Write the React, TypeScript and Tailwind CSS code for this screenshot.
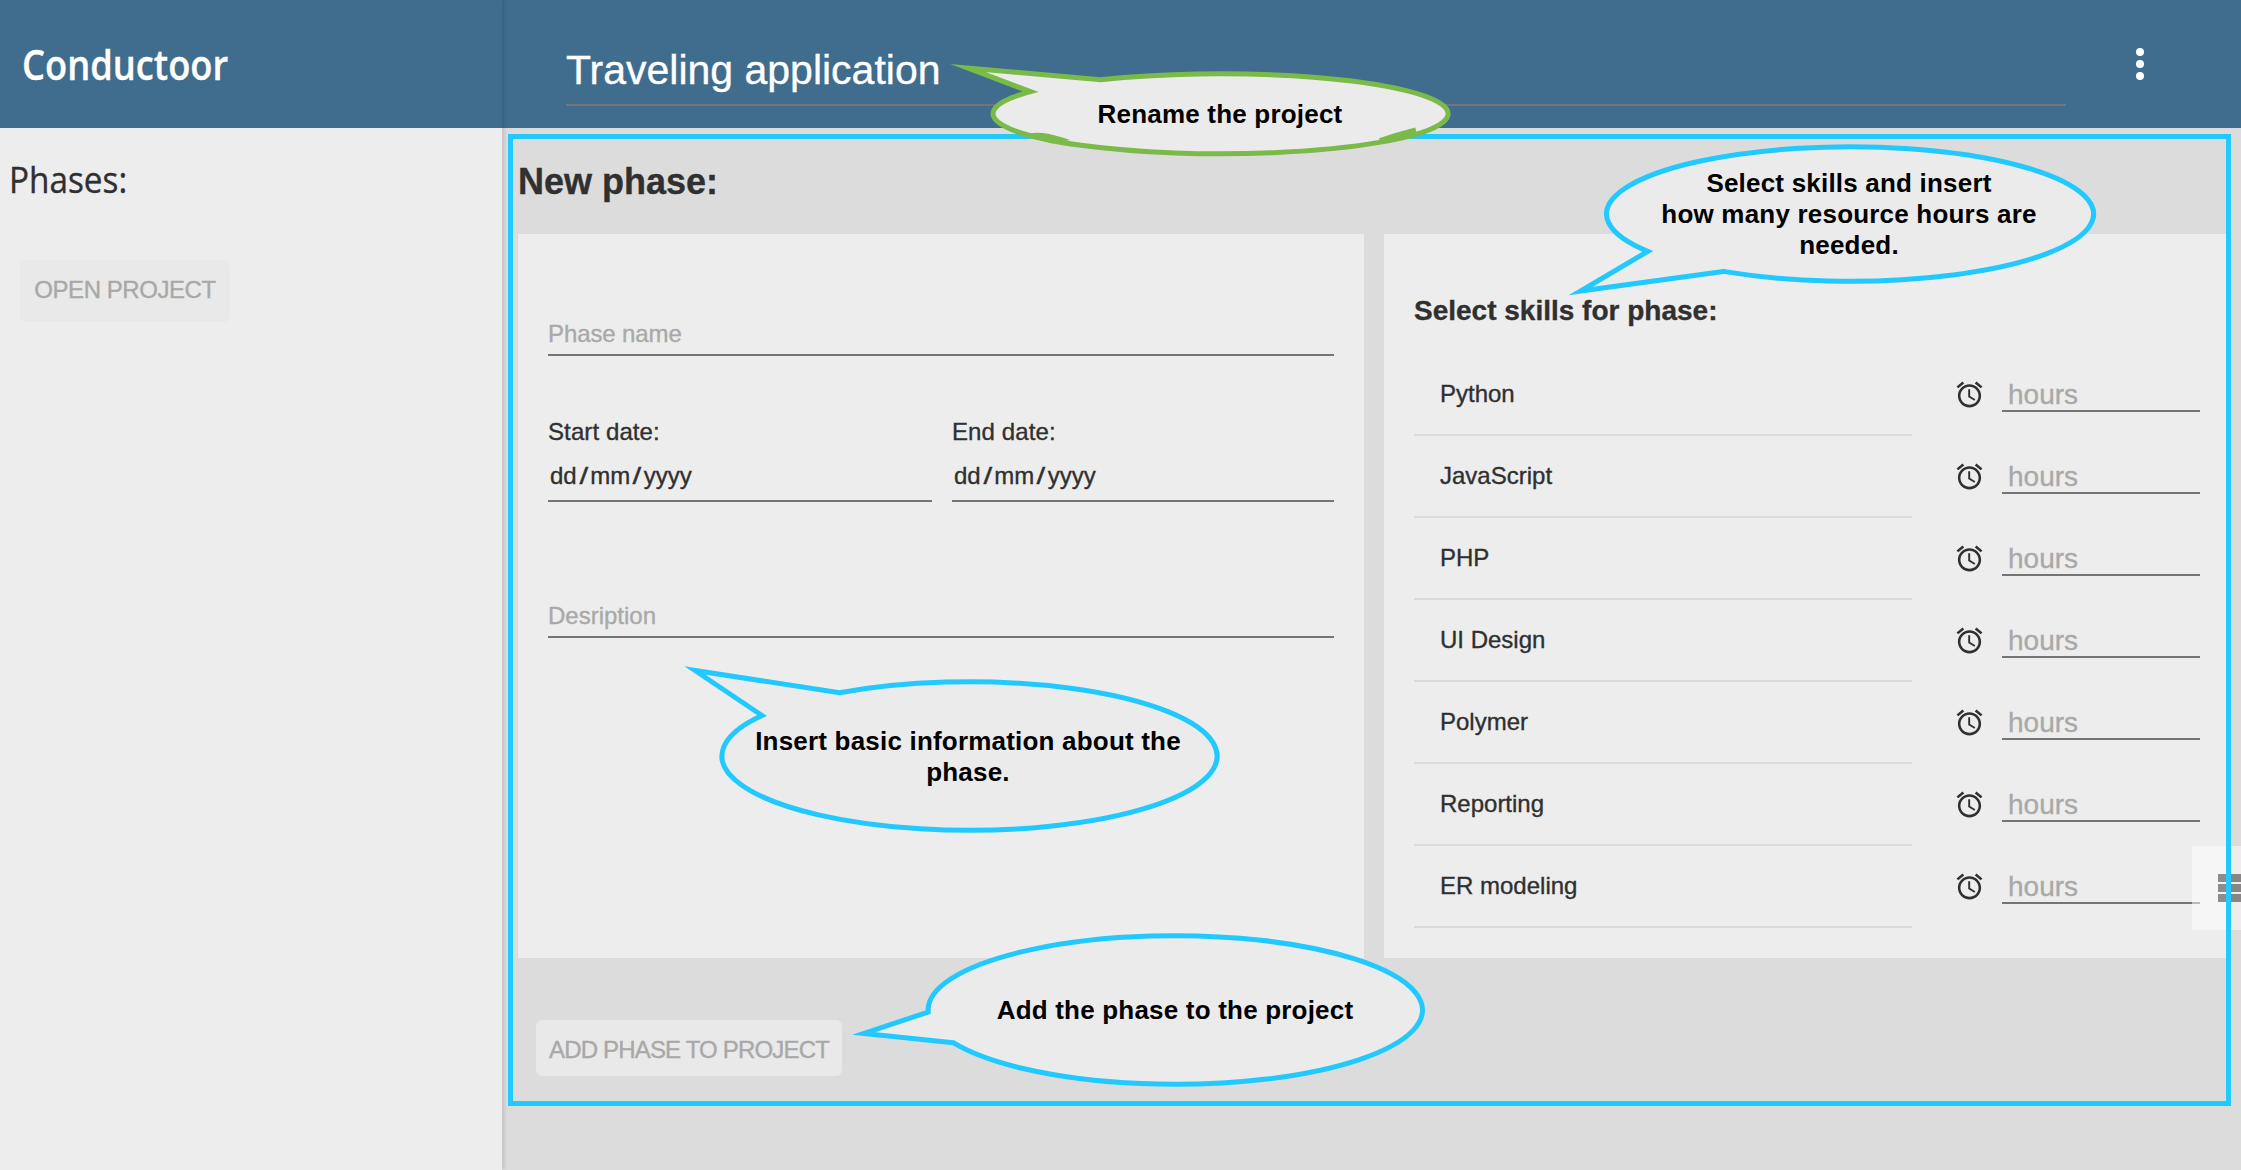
const SKILLS = ['Python', 'JavaScript', 'PHP', 'UI Design', 'Polymer', 'Reporting', 'ER modeling'];

function AlarmIcon() {
  return (
    <svg viewBox="0 0 24 24" className="h-[31px] w-[31px] shrink-0 fill-[#303030]">
      <path d="M22 5.72l-4.6-3.86-1.29 1.53 4.6 3.86L22 5.72zM7.88 3.39L6.6 1.86 2 5.71l1.29 1.53 4.59-3.85zM12.5 8H11v6l4.75 2.85.75-1.23-4-2.37V8zM12 4c-4.97 0-9 4.03-9 9s4.02 9 9 9c4.97 0 9-4.03 9-9s-4.03-9-9-9zm0 16c-3.87 0-7-3.13-7-7s3.13-7 7-7 7 3.13 7 7-3.13 7-7 7z" />
    </svg>
  );
}

function Slash() {
  return <span className="w-[9.5px] scale-x-[1.3] text-center">/</span>;
}

function DateField({ label }: { label: string }) {
  return (
    <div className="h-[82px] border-b-2 border-[#757575] text-[24px] text-[#303030]">
      <div className="-mt-[2px] h-[28px] leading-[28px] tracking-[0.1px]">{label}</div>
      <div className="mt-[16px] flex h-[28px] leading-[28px]">
        <span className="px-[2px]">dd</span>
        <Slash />
        <span className="px-[2px]">mm</span>
        <Slash />
        <span className="px-[2px]">yyyy</span>
      </div>
    </div>
  );
}

function SkillRow({ name }: { name: string }) {
  return (
    <div className="flex h-[82px]">
      <div className="w-[498px] border-b-2 border-[#dbdbdb] pl-[26px] pt-[26px] text-[24px] leading-[28px] text-[#303030]">
        {name}
      </div>
      <div className="ml-[42px] pt-[25px]">
        <AlarmIcon />
      </div>
      <div className="ml-[17px] h-[58px] w-[198px] border-b-2 border-[#757575] pl-[6px] pt-[25px] text-[28px] leading-[32px] text-[#a9a9a9]">
        hours
      </div>
    </div>
  );
}

function Annotations() {
  return (
    <div className="pointer-events-none absolute inset-0 z-20 [-webkit-text-stroke:0]">
      <div className="absolute left-[508px] top-[134px] h-[972px] w-[1723px] border-[5px] border-[#22c9ff]" />
      <svg viewBox="0 0 2241 1170" className="absolute inset-0 h-full w-full" fill="#ebebeb" strokeWidth="5" strokeMiterlimit="20">
        <g stroke="#22c9ff">
          <path d="M1723.3 271.4 L1580.5 291 L1647.7 251.4 A243.5 67.2 0 1 1 1723.3 271.4 Z" />
          <path d="M762 715.5 L695 670.5 L839.5 692.8 A247.6 74.3 0 1 1 762 715.5 Z" />
          <path d="M953.3 1042.7 L864 1033.5 L928.2 1012 A247.2 74.3 0 1 1 953.3 1042.7 Z" />
        </g>
        <g stroke="#7aba49">
          <path d="M1030.5 91.7 L968 68 L1100.7 79.7 A227.6 40 0 1 1 1030.5 91.7 Z" />
          <path d="M1034 135.5 Q1044 134.500 1060 139.500 L1052 141 Z" fill="#7aba49" />
          <path d="M1380 141 L1396 136 L1416 130.500" fill="none" strokeWidth="6" />
        </g>
      </svg>
      <div className="absolute left-[1020px] top-[99px] w-[400px] text-center text-[26px] font-bold leading-[31px] tracking-[0.2px] text-black">
        Rename the project
      </div>
      <div className="absolute left-[1649px] top-[168px] w-[400px] text-center text-[26px] font-bold leading-[31px] tracking-[0.2px] text-black">
        Select skills and insert
        <br />
        how many resource hours are
        <br />
        needed.
      </div>
      <div className="absolute left-[718px] top-[726px] w-[500px] text-center text-[26px] font-bold leading-[31px] tracking-[0.2px] text-black">
        Insert basic information about the
        <br />
        phase.
      </div>
      <div className="absolute left-[975px] top-[995px] w-[400px] text-center text-[26px] font-bold leading-[31px] tracking-[0.2px] text-black">
        Add the phase to the project
      </div>
    </div>
  );
}

export default function App() {
  return (
    <div className="relative flex h-[1170px] w-[2241px] overflow-hidden bg-[#dcdcdc] font-['Liberation_Sans',Arial,sans-serif] [-webkit-text-stroke:0.35px]">
      <aside className="z-10 flex w-[502px] shrink-0 flex-col bg-[#ededed] shadow-[2px_0_4px_rgba(0,0,0,0.13)]">
        <div className="h-[128px] bg-[#406d8e] pl-[22px] pt-[34px]">
          <div className="origin-left scale-x-[0.885] whitespace-nowrap font-['Open_Sans','Noto_Sans',sans-serif] text-[41px] font-semibold leading-[60px] text-white">
            Conductoor
          </div>
        </div>
        <div className="pl-[9px] pt-[24px]">
          <div className="origin-left scale-x-[0.925] whitespace-nowrap font-['Open_Sans','Noto_Sans',sans-serif] text-[36px] leading-[56px] text-[#303030]">
            Phases:
          </div>
        </div>
        <button className="ml-[20px] mt-[52px] h-[62px] w-[210px] whitespace-nowrap rounded-[6px] bg-[#e9e9e9] pb-[2px] text-[24px] tracking-[-0.45px] text-[#a8a8a8]">
          OPEN PROJECT
        </button>
      </aside>

      <main className="flex min-w-0 flex-1 flex-col">
        <header className="flex h-[128px] shrink-0 bg-[#406d8e] pl-[64px]">
          <div className="h-[106px] w-[1500px] border-b-2 border-[#757575] pt-[46px] text-[41px] leading-[48px] text-white">
            Traveling application
          </div>
          <div className="ml-[70px] flex flex-col gap-1 pt-[48px]">
            <span className="h-2 w-2 rounded-full bg-white" />
            <span className="h-2 w-2 rounded-full bg-white" />
            <span className="h-2 w-2 rounded-full bg-white" />
          </div>
        </header>

        <h1 className="ml-[16px] h-[106px] pt-[33px] text-[36px] font-bold leading-[42px] text-[#303030]">New phase:</h1>

        <div className="ml-[16px] flex h-[724px] gap-[20px]">
          <section className="w-[846px] bg-[#ededed] px-[30px] pt-[80px]">
            <div className="h-[42px] border-b-2 border-[#757575] pt-[6px] text-[24px] leading-[28px] tracking-[-0.1px] text-[#a9a9a9]">
              Phase name
            </div>
            <div className="mt-[64px] grid grid-cols-[384px_382px] gap-x-[20px]">
              <DateField label="Start date:" />
              <DateField label="End date:" />
            </div>
            <div className="mt-[94px] h-[42px] border-b-2 border-[#757575] pt-[6px] text-[24px] leading-[28px] text-[#a9a9a9]">
              Desription
            </div>
          </section>
          <section className="w-[845px] bg-[#ededed] pl-[30px] pt-[61px]">
            <h2 className="h-[59px] text-[28px] font-bold leading-[32px] text-[#303030]">Select skills for phase:</h2>
            {SKILLS.map((name) => (
              <SkillRow key={name} name={name} />
            ))}
          </section>
        </div>

        <button className="ml-[34px] mt-[62px] h-[56px] w-[306px] shrink-0 whitespace-nowrap rounded-[6px] bg-[#e9e9e9] pt-[4px] text-[24px] tracking-[-0.82px] text-[#a8a8a8]">
          ADD PHASE TO PROJECT
        </button>
      </main>

      <div className="absolute right-0 top-[846px] flex h-[84px] w-[49px] flex-col gap-[2px] bg-white pl-[26px] pt-[28px] opacity-50">
        <span className="h-2 bg-[#303030]" />
        <span className="h-2 bg-[#303030]" />
        <span className="h-2 bg-[#303030]" />
      </div>

      <Annotations />
    </div>
  );
}
